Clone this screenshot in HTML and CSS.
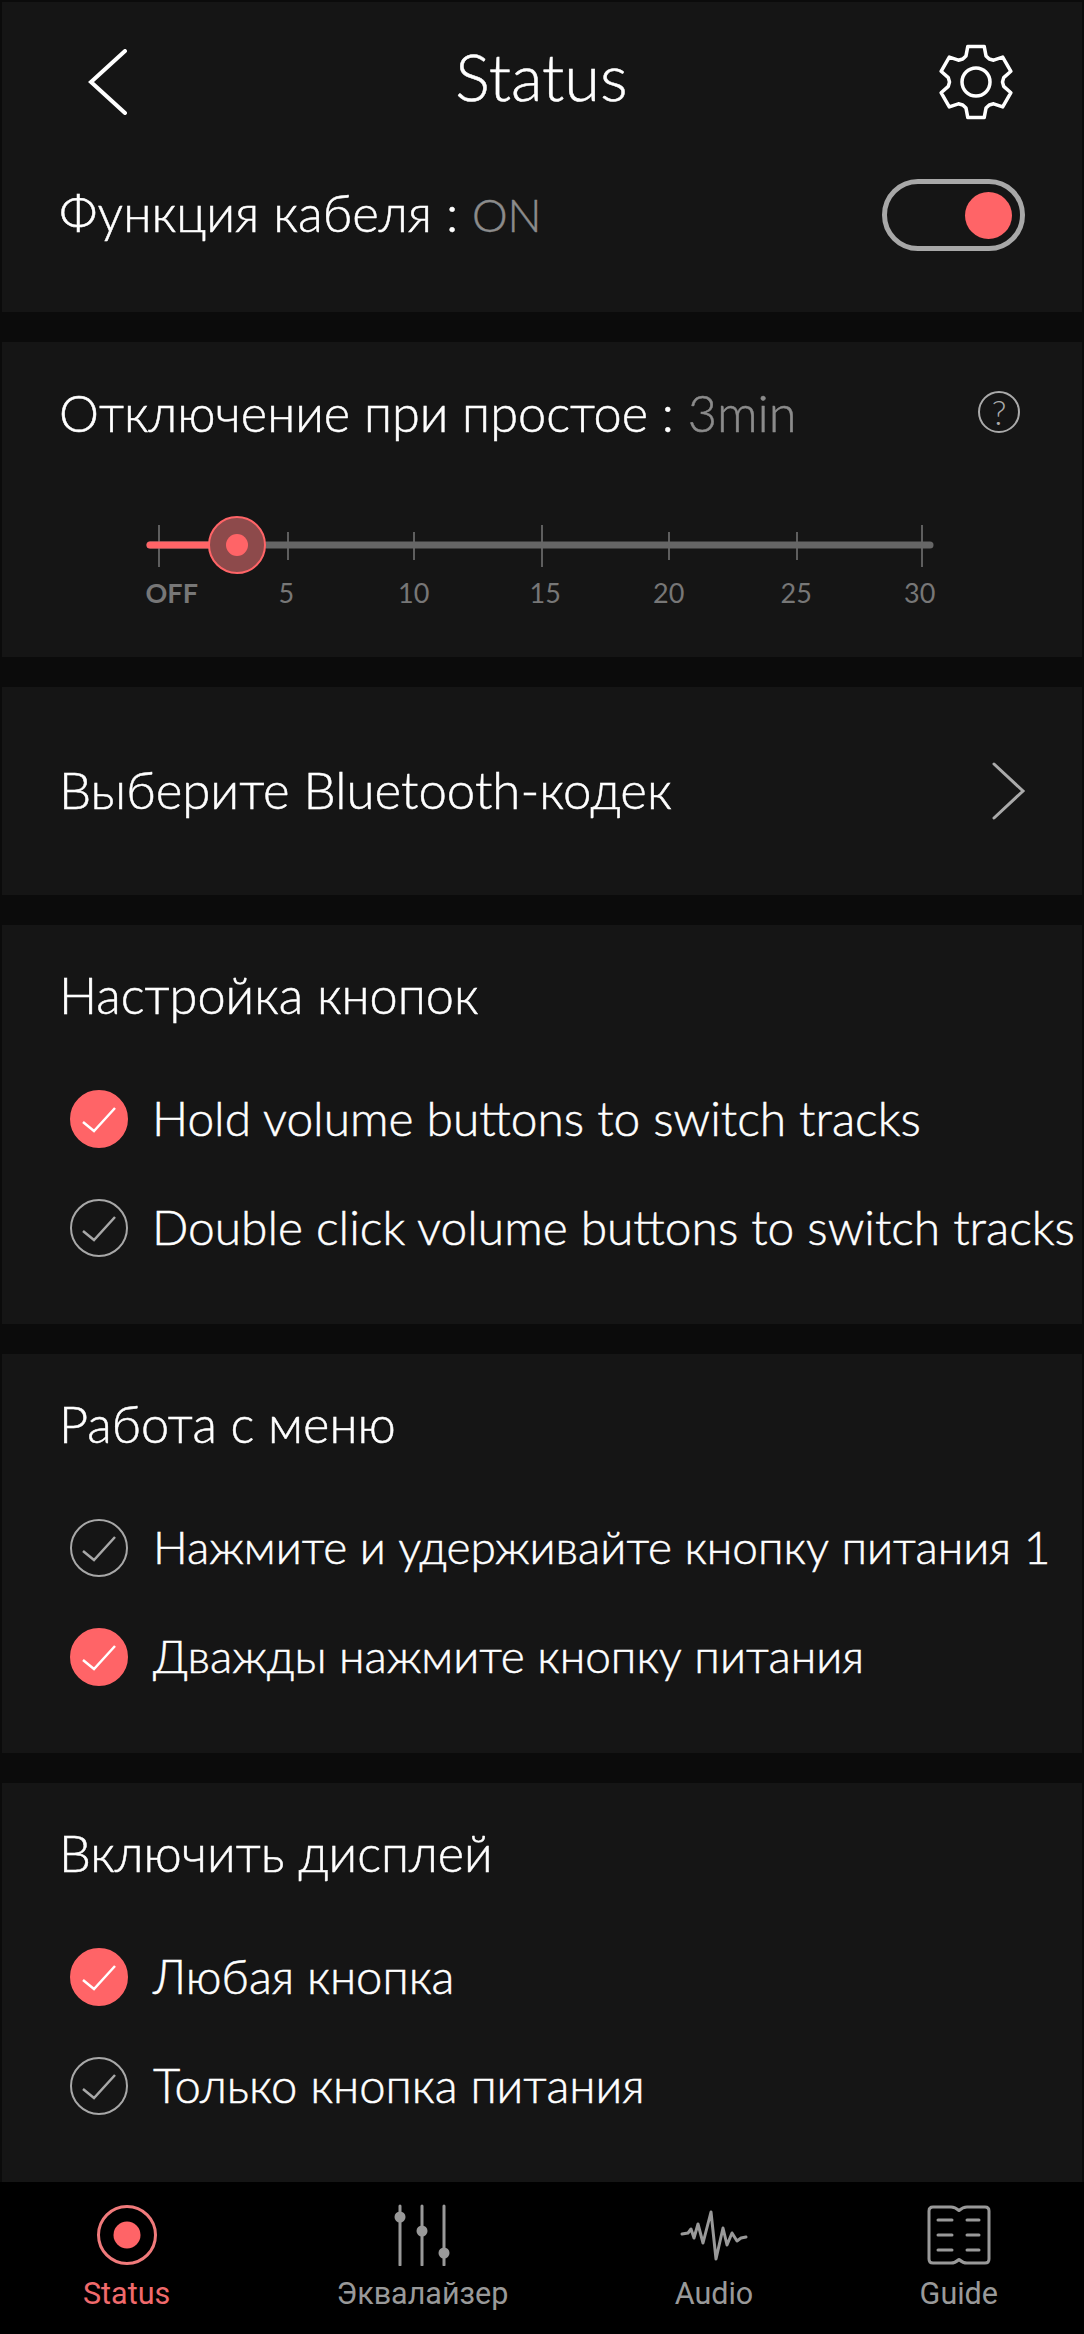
FILE: index.html
```html
<!DOCTYPE html>
<html lang="ru">
<head>
	<meta charset="UTF-8">
	<title>Status</title>
	<link rel="stylesheet" href="styles.css">
</head>
<body>
	<div class="panel first">
		<div class="header">
			<svg class="back" width="40" height="66" viewBox="0 0 40 66"><polyline points="37,2 3,33 37,64"/></svg>
			<h1 class="title">Status</h1>
			<svg class="gear" width="76" height="76" viewBox="-38 -38 76 76">
				<path d="M-10 -26.1L-8.2 -35.6H8.2L10 -26.1L13.25 -22.95L17.6 -21.8L26.7 -24.9L34.9 -10.7L27.7 -4.4L26.5 0L27.7 4.4L34.9 10.7L26.7 24.9L17.6 21.8L13.25 22.95L10 26.1L8.2 35.6H-8.2L-10 26.1L-13.25 22.95L-17.6 21.8L-26.7 24.9L-34.9 10.7L-27.7 4.4L-26.5 0L-27.7 -4.4L-34.9 -10.7L-26.7 -24.9L-17.6 -21.8L-13.25 -22.95Z"/>
				<circle r="14"/>
			</svg>
		</div>
		<div class="row cable">
			<span>Функция кабеля : <em class="on-value">ON</em></span>
			<div class="toggle"><i></i></div>
		</div>
	</div>

	<div class="panel timer">
		<div class="row">
			<span>Отключение при простое : <em>3min</em></span>
			<div class="help">?</div>
		</div>
		<svg class="slider" width="800" height="60" viewBox="0 0 800 60">
			<g class="ticks">
				<line x1="19" x2="19" y1="10" y2="52"/>
				<line x1="148" x2="148" y1="17" y2="45"/>
				<line x1="274" x2="274" y1="17" y2="45"/>
				<line x1="402" x2="402" y1="10" y2="52"/>
				<line x1="529" x2="529" y1="17" y2="45"/>
				<line x1="657" x2="657" y1="17" y2="45"/>
				<line x1="782" x2="782" y1="10" y2="52"/>
			</g>
			<line class="track" x1="10" x2="790" y1="30" y2="30"/>
			<line class="fill" x1="10" x2="97" y1="30" y2="30"/>
			<circle class="thumb" cx="97" cy="30" r="28"/>
			<circle class="dot" cx="97" cy="30" r="11"/>
		</svg>
		<div class="labels">
			<span class="off">OFF</span>
			<span>5</span>
			<span>10</span>
			<span class="mid">15</span>
			<span>20</span>
			<span>25</span>
			<span class="last">30</span>
		</div>
	</div>

	<div class="panel codec">
		<span>Выберите Bluetooth-кодек</span>
		<svg class="more" width="36" height="60" viewBox="0 0 36 60"><polyline points="3,3 32,30 3,57"/></svg>
	</div>

	<div class="panel group buttons">
		<div class="group-title">Настройка кнопок</div>
		<div class="option">
			<svg class="check on" width="58" height="58" viewBox="0 0 58 58"><circle cx="29" cy="29" r="28"/><polyline points="13,32 24,41 45,18"/></svg>
			<span>Hold volume buttons to switch tracks</span>
		</div>
		<div class="option">
			<svg class="check" width="58" height="58" viewBox="0 0 58 58"><circle cx="29" cy="29" r="28"/><polyline points="13,32 24,41 45,18"/></svg>
			<span>Double click volume buttons to switch tracks</span>
		</div>
	</div>

	<div class="panel group menu">
		<div class="group-title">Работа с меню</div>
		<div class="option">
			<svg class="check" width="58" height="58" viewBox="0 0 58 58"><circle cx="29" cy="29" r="28"/><polyline points="13,32 24,41 45,18"/></svg>
			<span>Нажмите и удерживайте кнопку питания 1</span>
		</div>
		<div class="option">
			<svg class="check on" width="58" height="58" viewBox="0 0 58 58"><circle cx="29" cy="29" r="28"/><polyline points="13,32 24,41 45,18"/></svg>
			<span>Дважды нажмите кнопку питания</span>
		</div>
	</div>

	<div class="panel group screen">
		<div class="group-title">Включить дисплей</div>
		<div class="option">
			<svg class="check on" width="58" height="58" viewBox="0 0 58 58"><circle cx="29" cy="29" r="28"/><polyline points="13,32 24,41 45,18"/></svg>
			<span>Любая кнопка</span>
		</div>
		<div class="option">
			<svg class="check" width="58" height="58" viewBox="0 0 58 58"><circle cx="29" cy="29" r="28"/><polyline points="13,32 24,41 45,18"/></svg>
			<span>Только кнопка питания</span>
		</div>
	</div>

	<div class="tabs">
		<div class="tab active">
			<svg width="62" height="62" viewBox="0 0 62 62"><circle class="ring" cx="31" cy="31" r="28.5"/><circle class="core" cx="31" cy="31" r="13.5"/></svg>
			<span>Status</span>
		</div>
		<div class="tab">
			<svg width="60" height="62" viewBox="0 0 60 62">
				<path class="line" d="M8 2V61M30 2V61M52 2V61"/>
				<circle class="knob" cx="8" cy="13" r="5.5"/>
				<circle class="knob" cx="30" cy="27" r="5.5"/>
				<circle class="knob" cx="52" cy="49" r="5.5"/>
			</svg>
			<span>Эквалайзер</span>
		</div>
		<div class="tab">
			<svg width="68" height="62" viewBox="-2 -7 68 62"><polyline class="line" points="0,23 6,22 9,18 12,27 16,13 21,32 29,1 34,48 41,17 45,34 50,22 55,30 59,27 64,26"/></svg>
			<span>Audio</span>
		</div>
		<div class="tab">
			<svg width="64" height="62" viewBox="0 -1 64 62">
				<path class="line" d="M6 2H24Q28 2 32 5.5Q36 2 40 2H58Q62 2 62 6V54Q62 58 58 58H40Q36 58 32 54.5Q28 58 24 58H6Q2 58 2 54V6Q2 2 6 2Z"/>
				<path class="line" d="M11 15H25M40 15H52M11 30H25M40 30H52M11 45H25M40 45H52"/>
			</svg>
			<span>Guide</span>
		</div>
	</div>
</body>
</html>
```

FILE: styles.css
```css
*{
	margin: 0;
	padding: 0;
	box-sizing: border-box;
}
body{
	background: #0b0b0b;
	width: 1084px;
	height: 2334px;
	padding-top: 2px;
	font-family: "Lato", "Noto Sans", sans-serif;
	font-size: 50.5px;
	font-weight: 300;
	-webkit-text-stroke: 0.5px;
	color: #fff;
	overflow: hidden;
}
em{
	font-style: normal;
	color: #8c8c8c;
}
.on-value{
	font-size: 45px;
}
.panel{
	background: #151515;
	margin: 0 2px 30px;
}
.panel.first{
	height: 310px;
}
.header{
	display: grid;
	grid-template-columns: 1fr auto 1fr;
	align-items: center;
	height: 160px;
	padding: 0 68px 0 86px;
}
.title{
	margin: 0 19px 12px 0;
	font-size: 65px;
	font-weight: 300;
}
.back polyline{
	fill: none;
	stroke: #fff;
	stroke-width: 4;
	stroke-linecap: round;
}
.gear{
	justify-self: end;
	fill: none;
	stroke: #fff;
	stroke-width: 3.5;
	stroke-linejoin: round;
}
.row{
	display: flex;
	justify-content: space-between;
	align-items: center;
	height: 56px;
	padding: 0 57px;
}
.row > span{
	margin-bottom: 6px;
}
.cable{
	height: 72px;
	margin-top: 17px;
	font-size: 51px;
}
.toggle{
	display: flex;
	align-items: center;
	justify-content: flex-end;
	width: 143px;
	height: 72px;
	padding-right: 8px;
	border: 5px solid #a8a8a8;
	border-radius: 36px;
}
.toggle i{
	width: 47px;
	height: 47px;
	border-radius: 50%;
	background: #ff6467;
}
.timer{
	height: 315px;
	padding-top: 45px;
}
.help{
	width: 42px;
	height: 42px;
	margin: 0 5px 6px 0;
	border: 2px solid #aaa;
	border-radius: 50%;
	font-size: 34px;
	line-height: 38px;
	text-align: center;
	color: #aaa;
	-webkit-text-stroke: 0;
}
.slider{
	display: block;
	margin: 72px 0 0 138px;
}
.ticks line{
	stroke: #777;
	stroke-width: 1.5;
}
.track{
	stroke: #666;
	stroke-width: 7;
	stroke-linecap: round;
}
.fill{
	stroke: #ff6467;
	stroke-width: 7;
	stroke-linecap: round;
}
.thumb{
	fill: #8d4a4b;
	stroke: #ff6467;
	stroke-width: 2;
}
.dot{
	fill: #ff6467;
}
.labels{
	display: grid;
	grid-template-columns: repeat(7, 127.5px);
	margin: 0 0 0 93px;
	font-size: 27px;
	font-weight: 400;
	line-height: 36px;
	text-align: center;
	color: #777;
	-webkit-text-stroke: 0;
}
.labels .off{
	padding-left: 26px;
	font-weight: 700;
}
.labels .mid{
	padding-left: 8px;
}
.labels .last{
	padding-right: 8px;
}
.codec{
	display: flex;
	justify-content: space-between;
	align-items: center;
	height: 208px;
	padding: 0 55px 0 57px;
	font-size: 51px;
}
.codec > span{
	margin-bottom: 3px;
}
.more polyline{
	fill: none;
	stroke: #aaa;
	stroke-width: 3;
	stroke-linecap: round;
}
.group{
	height: 399px;
	padding: 45px 0 0 57px;
}
.group-title{
	height: 56px;
	line-height: 50px;
}
.option{
	display: flex;
	align-items: center;
	gap: 25px;
	height: 58px;
	margin-top: 51px;
	padding-left: 11px;
	white-space: nowrap;
}
.option span{
	margin-bottom: 3px;
}
.group-title + .option{
	margin-top: 64px;
}
.buttons .option{
	gap: 24px;
	font-size: 47.9px;
}
.menu .option{
	font-size: 46px;
}
.screen .option{
	font-size: 47.2px;
}
.check circle{
	fill: none;
	stroke: #a8a8a8;
	stroke-width: 2;
}
.check polyline{
	fill: none;
	stroke: #a8a8a8;
	stroke-width: 2.5;
}
.check.on circle{
	fill: #ff6467;
	stroke: #ff6467;
}
.check.on polyline{
	stroke: #fff;
}
.tabs{
	position: fixed;
	left: 0;
	right: 0;
	bottom: 0;
	display: flex;
	justify-content: space-between;
	height: 152px;
	padding: 22px 86px 0 83px;
	background: #000;
	-webkit-text-stroke: 0;
}
.tab{
	display: flex;
	flex-direction: column;
	align-items: center;
	gap: 8px;
	font-family: "Roboto", "Noto Sans", sans-serif;
	font-size: 30.5px;
	font-weight: 400;
	line-height: 40px;
	color: #999;
}
.tab.active{
	color: #f06a6c;
}
.ring{
	fill: none;
	stroke: #f07a7b;
	stroke-width: 3;
}
.core{
	fill: #ff6467;
}
.line{
	fill: none;
	stroke: #999;
	stroke-width: 3;
	stroke-linecap: round;
	stroke-linejoin: round;
}
.knob{
	fill: #999;
}
```
